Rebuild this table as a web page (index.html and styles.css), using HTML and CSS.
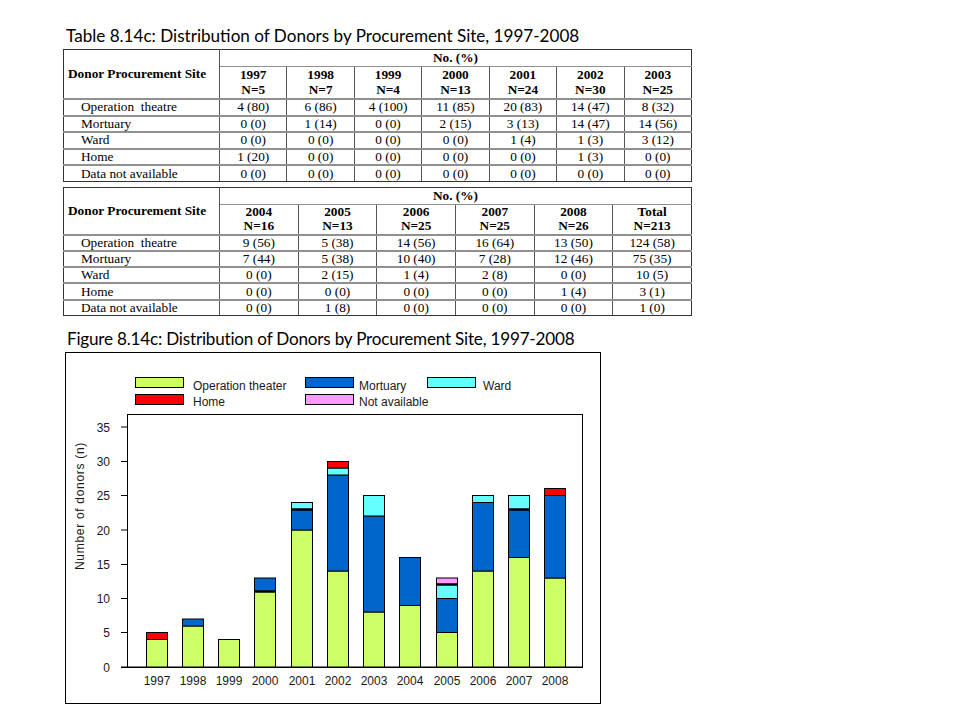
FILE: index.html
```html
<!DOCTYPE html>
<html>
<head>
<meta charset="utf-8">
<title>Table 8.14c</title>
<link rel="stylesheet" href="styles.css">
</head>
<body>
<div class="page">
  <h1 class="title">Table 8.14c: Distribution of Donors by Procurement Site, 1997-2008</h1>

  <table class="tbl t1">
    <colgroup><col class="c-site"><col><col><col><col><col><col><col></colgroup>
    <thead>
      <tr class="hr1"><th rowspan="2" class="site-h">Donor Procurement Site</th><th colspan="7">No. (%)</th></tr>
      <tr class="hr2"><th>1997<br>N=5</th><th>1998<br>N=7</th><th>1999<br>N=4</th><th>2000<br>N=13</th><th>2001<br>N=24</th><th>2002<br>N=30</th><th>2003<br>N=25</th></tr>
    </thead>
    <tbody>
      <tr><td class="site">Operation&nbsp; theatre</td><td>4 (80)</td><td>6 (86)</td><td>4 (100)</td><td>11 (85)</td><td>20 (83)</td><td>14 (47)</td><td>8 (32)</td></tr>
      <tr><td class="site">Mortuary</td><td>0 (0)</td><td>1 (14)</td><td>0 (0)</td><td>2 (15)</td><td>3 (13)</td><td>14 (47)</td><td>14 (56)</td></tr>
      <tr><td class="site">Ward</td><td>0 (0)</td><td>0 (0)</td><td>0 (0)</td><td>0 (0)</td><td>1 (4)</td><td>1 (3)</td><td>3 (12)</td></tr>
      <tr><td class="site">Home</td><td>1 (20)</td><td>0 (0)</td><td>0 (0)</td><td>0 (0)</td><td>0 (0)</td><td>1 (3)</td><td>0 (0)</td></tr>
      <tr><td class="site">Data not available</td><td>0 (0)</td><td>0 (0)</td><td>0 (0)</td><td>0 (0)</td><td>0 (0)</td><td>0 (0)</td><td>0 (0)</td></tr>
    </tbody>
  </table>

  <table class="tbl t2">
    <colgroup><col class="c-site"><col><col><col><col><col><col></colgroup>
    <thead>
      <tr class="hr1"><th rowspan="2" class="site-h">Donor Procurement Site</th><th colspan="6">No. (%)</th></tr>
      <tr class="hr2"><th>2004<br>N=16</th><th>2005<br>N=13</th><th>2006<br>N=25</th><th>2007<br>N=25</th><th>2008<br>N=26</th><th>Total<br>N=213</th></tr>
    </thead>
    <tbody>
      <tr><td class="site">Operation&nbsp; theatre</td><td>9 (56)</td><td>5 (38)</td><td>14 (56)</td><td>16 (64)</td><td>13 (50)</td><td>124 (58)</td></tr>
      <tr><td class="site">Mortuary</td><td>7 (44)</td><td>5 (38)</td><td>10 (40)</td><td>7 (28)</td><td>12 (46)</td><td>75 (35)</td></tr>
      <tr><td class="site">Ward</td><td>0 (0)</td><td>2 (15)</td><td>1 (4)</td><td>2 (8)</td><td>0 (0)</td><td>10 (5)</td></tr>
      <tr><td class="site">Home</td><td>0 (0)</td><td>0 (0)</td><td>0 (0)</td><td>0 (0)</td><td>1 (4)</td><td>3 (1)</td></tr>
      <tr><td class="site">Data not available</td><td>0 (0)</td><td>1 (8)</td><td>0 (0)</td><td>0 (0)</td><td>0 (0)</td><td>1 (0)</td></tr>
    </tbody>
  </table>

  <h2 class="title fig-title">Figure 8.14c: Distribution of Donors by Procurement Site, 1997-2008</h2>

  <div class="chart">
    <svg class="chart-svg" width="534" height="350" viewBox="0 0 534 350" xmlns="http://www.w3.org/2000/svg">
      <!-- legend -->
      <g class="legend">
        <rect x="69.5" y="24.5" width="48" height="10" fill="#CCFF66" stroke="#000"/>
        <text x="127" y="37">Operation theater</text>
        <rect x="69.5" y="41.5" width="48" height="10" fill="#FF0000" stroke="#000"/>
        <text x="127" y="53">Home</text>
        <rect x="239.5" y="24.5" width="48" height="10" fill="#0066CC" stroke="#000"/>
        <text x="293" y="37">Mortuary</text>
        <rect x="239.5" y="41.5" width="48" height="10" fill="#FF99FF" stroke="#000"/>
        <text x="293" y="53">Not available</text>
        <rect x="361.5" y="24.5" width="48" height="10" fill="#66FFFF" stroke="#000"/>
        <text x="417" y="37">Ward</text>
      </g>

      <!-- plot frame -->
      <rect x="61.5" y="61.5" width="455" height="252.5" fill="#fff" stroke="#000"/>

      <!-- y ticks -->
      <g stroke="#000">
        <line x1="55" y1="314" x2="61" y2="314"/>
        <line x1="55" y1="279.5" x2="61" y2="279.5"/>
        <line x1="55" y1="245.5" x2="61" y2="245.5"/>
        <line x1="55" y1="211.5" x2="61" y2="211.5"/>
        <line x1="55" y1="177" x2="61" y2="177"/>
        <line x1="55" y1="142.5" x2="61" y2="142.5"/>
        <line x1="55" y1="108.5" x2="61" y2="108.5"/>
        <line x1="55" y1="74" x2="61" y2="74"/>
      </g>
      <g class="ylab">
        <text x="44" y="318.5">0</text>
        <text x="44" y="284">5</text>
        <text x="44" y="250">10</text>
        <text x="44" y="216">15</text>
        <text x="44" y="181.5">20</text>
        <text x="44" y="147">25</text>
        <text x="44" y="113">30</text>
        <text x="44" y="78.5">35</text>
      </g>
      <text class="ytitle" transform="translate(17.5 153) rotate(-90)">Number of donors (n)</text>

      <!-- bars -->
      <g stroke="#000" stroke-width="1">
        <!-- 1997 -->
        <rect x="80.5" y="286.5" width="21" height="27.5" fill="#CCFF66"/>
        <rect x="80.5" y="279.5" width="21" height="7" fill="#FF0000"/>
        <!-- 1998 -->
        <rect x="116.5" y="273" width="21" height="41" fill="#CCFF66"/>
        <rect x="116.5" y="266" width="21" height="7" fill="#0066CC"/>
        <!-- 1999 -->
        <rect x="152.5" y="286.5" width="21" height="27.5" fill="#CCFF66"/>
        <!-- 2000 -->
        <rect x="188.5" y="238.5" width="21" height="75.5" fill="#CCFF66"/>
        <rect x="188.5" y="225" width="21" height="13.5" fill="#0066CC"/>
        <!-- 2001 -->
        <rect x="225.5" y="177" width="21" height="137" fill="#CCFF66"/>
        <rect x="225.5" y="156.5" width="21" height="20.5" fill="#0066CC"/>
        <rect x="225.5" y="149.5" width="21" height="7" fill="#66FFFF"/>
        <!-- 2002 -->
        <rect x="261.5" y="218" width="21" height="96" fill="#CCFF66"/>
        <rect x="261.5" y="122" width="21" height="96" fill="#0066CC"/>
        <rect x="261.5" y="115" width="21" height="7" fill="#66FFFF"/>
        <rect x="261.5" y="108.5" width="21" height="6.5" fill="#FF0000"/>
        <!-- 2003 -->
        <rect x="297.5" y="259" width="21" height="55" fill="#CCFF66"/>
        <rect x="297.5" y="163" width="21" height="96" fill="#0066CC"/>
        <rect x="297.5" y="142.5" width="21" height="20.5" fill="#66FFFF"/>
        <!-- 2004 -->
        <rect x="333.5" y="252.5" width="21" height="61.5" fill="#CCFF66"/>
        <rect x="333.5" y="204.5" width="21" height="48" fill="#0066CC"/>
        <!-- 2005 -->
        <rect x="370.5" y="279.5" width="21" height="34.5" fill="#CCFF66"/>
        <rect x="370.5" y="245.5" width="21" height="34" fill="#0066CC"/>
        <rect x="370.5" y="231.5" width="21" height="14" fill="#66FFFF"/>
        <rect x="370.5" y="225" width="21" height="6.5" fill="#FF99FF"/>
        <!-- 2006 -->
        <rect x="406.5" y="218" width="21" height="96" fill="#CCFF66"/>
        <rect x="406.5" y="149.5" width="21" height="68.5" fill="#0066CC"/>
        <rect x="406.5" y="142.5" width="21" height="7" fill="#66FFFF"/>
        <!-- 2007 -->
        <rect x="442.5" y="204.5" width="21" height="109.5" fill="#CCFF66"/>
        <rect x="442.5" y="156.5" width="21" height="48" fill="#0066CC"/>
        <rect x="442.5" y="142.5" width="21" height="14" fill="#66FFFF"/>
        <!-- 2008 -->
        <rect x="478.5" y="225" width="21" height="89" fill="#CCFF66"/>
        <rect x="478.5" y="142.5" width="21" height="82.5" fill="#0066CC"/>
        <rect x="478.5" y="135.5" width="21" height="7" fill="#FF0000"/>
      </g>
      <!-- zero-height segment lines -->
      <g stroke="#000" stroke-width="2.5">
        <line x1="188.5" y1="238.5" x2="209.5" y2="238.5"/>
        <line x1="225.5" y1="156.5" x2="246.5" y2="156.5"/>
        <line x1="370.5" y1="231.5" x2="391.5" y2="231.5"/>
        <line x1="442.5" y1="156.5" x2="463.5" y2="156.5"/>
      </g>
      <!-- baseline -->
      <line x1="55" y1="314.5" x2="517" y2="314.5" stroke="#000"/>

      <!-- x labels -->
      <g class="xlab">
        <text x="91" y="332">1997</text>
        <text x="127" y="332">1998</text>
        <text x="163" y="332">1999</text>
        <text x="199" y="332">2000</text>
        <text x="236" y="332">2001</text>
        <text x="272" y="332">2002</text>
        <text x="308" y="332">2003</text>
        <text x="344" y="332">2004</text>
        <text x="381" y="332">2005</text>
        <text x="417" y="332">2006</text>
        <text x="453" y="332">2007</text>
        <text x="489" y="332">2008</text>
      </g>
    </svg>
  </div>
</div>
</body>
</html>
```

FILE: styles.css
```css
html, body {
  margin: 0;
  padding: 0;
  background: #fff;
}

.page {
  padding: 26px 0 0 63px;
}

.title {
  margin: 0 0 3px 3px;
  font-family: Lato, "Open Sans", sans-serif;
  font-weight: normal;
  font-size: 17.1px;
  line-height: 20px;
  color: #000;
}

.fig-title {
  margin: 13px 0 3px 4px;
  letter-spacing: -0.2px;
}

.tbl {
  border-collapse: collapse;
  table-layout: fixed;
  width: 629px;
  font-family: "Liberation Serif", "Times New Roman", serif;
  font-size: 13.3px;
  color: #000;
}

.t2 {
  margin-top: 5px;
}

.c-site {
  width: 156px;
}

.tbl th,
.tbl td {
  padding: 0;
  text-align: center;
  vertical-align: middle;
  line-height: 12px;
  border-left: 1px solid #555;
  border-right: 1px solid #555;
  border-top: 2px solid #909090;
  border-bottom: 2px solid #909090;
  white-space: nowrap;
  overflow: hidden;
}

.tbl th {
  font-weight: bold;
}

.tbl .hr2 th {
  line-height: 15px;
}

.t2 .hr2 th {
  line-height: 14.5px;
}

.tbl .hr1 th {
  border-top: 1px solid #333;
  border-bottom: 1px solid #909090;
}

.tbl .hr2 th {
  border-top: 1px solid #909090;
}

.tbl .site-h {
  text-align: left;
  padding-left: 4px;
  border-bottom: 2px solid #909090;
  border-left: 1px solid #333;
}

.tbl .site {
  text-align: left;
  padding-left: 17px;
  border-left: 1px solid #333;
}

.tbl tbody tr:last-child td {
  border-bottom: 1px solid #333;
}

.tbl tr > :last-child {
  border-right: 1px solid #333;
}

.t1 .hr1 { height: 16.5px; }
.t1 .hr2 { height: 33px; }
.t1 tbody tr { height: 16.5px; }

.t2 .hr1 { height: 16.5px; }
.t2 .hr2 { height: 29px; }
.t2 tbody tr { height: 16.3px; }

.chart {
  width: 534px;
  height: 350px;
  margin-left: 2px;
  border: 1px solid #000;
}

.chart-svg {
  display: block;
}

.chart-svg text {
  font-family: "Liberation Sans", Arial, sans-serif;
  font-size: 12px;
  fill: #1a1a1a;
}

.ylab text {
  text-anchor: end;
}

.xlab text {
  text-anchor: middle;
}

.chart-svg .ytitle {
  text-anchor: middle;
  letter-spacing: 0.7px;
}
```
